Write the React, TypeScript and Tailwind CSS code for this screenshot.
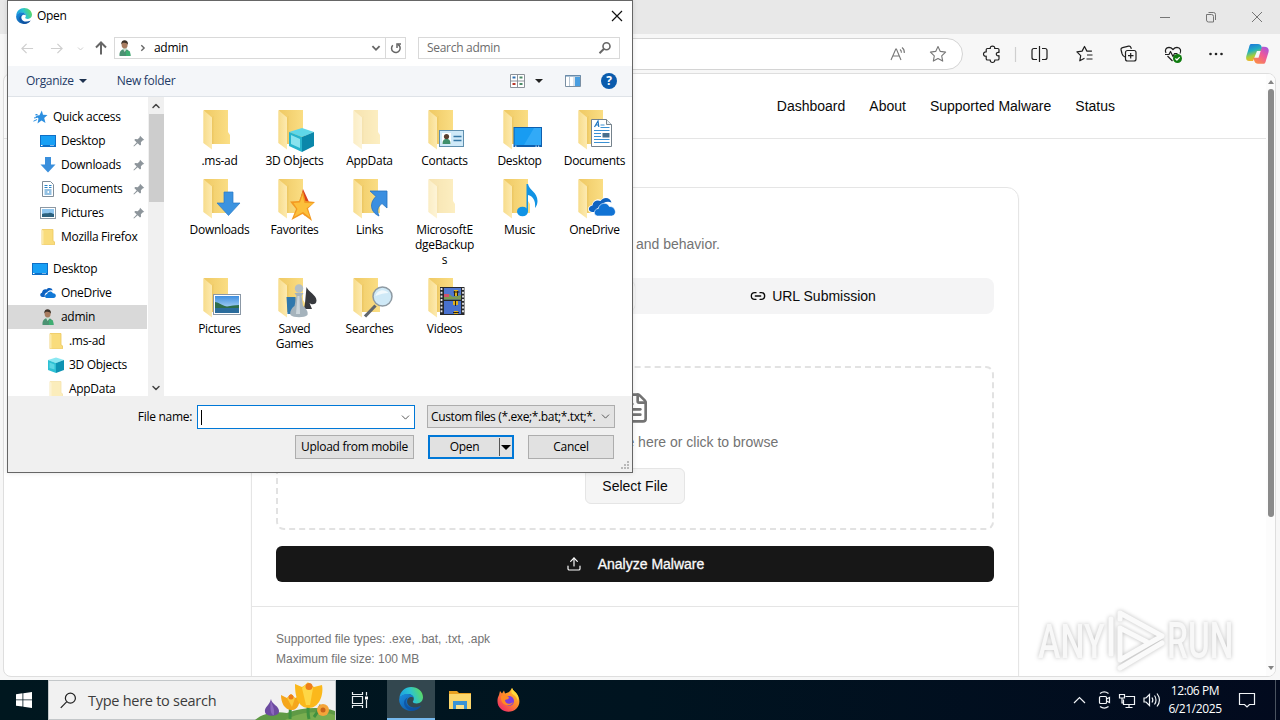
import type { ReactNode } from "react";
import { ChevronDown, ChevronUp, FileText, Link2, Upload } from "lucide-react";

const UI = "font-['Open_Sans','Noto_Sans',sans-serif]";
const WEB = "font-['Liberation_Sans',Arial,sans-serif]";

/* ---------- small icons ---------- */

function EdgeLogo({ className, id }: { className: string; id: string }) {
  return (
    <svg viewBox="0 0 24 24" className={className}>
      <defs>
        <linearGradient id={`${id}-top`} x1="0" y1="0.6" x2="1" y2="0.3">
          <stop offset="0" stopColor="#1b9de2" />
          <stop offset="0.5" stopColor="#2bc3d2" />
          <stop offset="1" stopColor="#5fdc5a" />
        </linearGradient>
        <linearGradient id={`${id}-low`} x1="0" y1="0" x2="1" y2="1">
          <stop offset="0" stopColor="#1b8fe0" />
          <stop offset="1" stopColor="#0c4a96" />
        </linearGradient>
      </defs>
      <path d="M0.4 11C1 4.500 6 0 12.200 0 19 0 24 4.800 24 10.200c0 3.800-2.900 6.200-6.200 6.200-2.700 0-4-.9-4-1.700 0-.7 1-1.100 1-3 0-2.400-2.400-4.400-5.400-4.400C5.500 7.300 1.800 8.800.4 11z" fill={`url(#${id}-top)`} />
      <path d="M0.200 12C.6 8.800 4.800 6.700 9.200 6.900c3.200.1 5.500 2.200 5.700 4.500-.8-1-2-1.500-3.300-1.300-2.300.4-3.700 2.400-3.500 4.800.3 3.400 3.800 5.600 7.900 5.500 2.500 0 4.600-.8 6-1.600-2 3.300-5.700 5.200-10 5.200C5.300 24-.3 18.500.2 12z" fill={`url(#${id}-low)`} />
      <path d="M9 10.500c-2 1.500-2.600 5-.6 7.700 2.600 3.600 9 3.600 13.400.7-2 3.200-5 4.800-8.600 5C7.500 22.500 4.800 19 5 15.500c.1-2.300 1.700-4.300 4-5z" fill="#0d4f9f" opacity="0.75" />
    </svg>
  );
}

function PersonIcon() {
  return (
    <svg viewBox="0 0 16 16" className="size-4 shrink-0">
      <path d="M2.500 16c-.3-4 1-6.500 5-7 4 .2 6 3 6 7z" fill="#4b9272" />
      <path d="M6 9l1.600 3L10 9l-.5-2H6.500z" fill="#c9dfd3" />
      <path d="M9 10.500l4 1 .5 4.500H9z" fill="#3fae72" />
      <ellipse cx="7.600" cy="4.800" rx="3" ry="3.800" fill="#a87c60" />
      <path d="M4.200 4.500C4 1.500 5.800 0 8 .2c2.300.2 3.300 2 2.900 4.600-.8-2-3.500-2-4.400-2-.8 0-1.500.6-2.300 1.700z" fill="#3c3128" />
    </svg>
  );
}

function DesktopIcon() {
  return (
    <svg viewBox="0 0 16 16" className="size-4 shrink-0">
      <rect x="0" y="2" width="16" height="12" fill="#0f6fc6" />
      <rect x="1" y="3" width="14" height="9" fill="#18a0f5" />
      <path d="M1 12.500h1.500M10.500 12.500h1M12.500 12.500h1" stroke="#fff" strokeWidth="1" />
    </svg>
  );
}

function CloudIcon() {
  return (
    <svg viewBox="0 0 16 16" className="size-4 shrink-0">
      <path d="M2.500 12C-.5 11.700-.4 8.200 2 7.700 2.300 5 4.600 3.800 6.500 4.600 8.300 2.200 12 2.800 12.700 5.500 9 4.300 7.500 6.600 7.300 7.400 5 7.500 4.200 10 5 12z" fill="#0f62c0" />
      <path d="M6.500 13c-2-.3-2-3.700.6-4 .4-3 4.700-3.600 5.800-.8 3.600-.1 4 4.500.6 4.800z" fill="#1178d6" />
    </svg>
  );
}

function CubeIcon() {
  return (
    <svg viewBox="0 0 16 16" className="size-4 shrink-0">
      <path d="M0 3l8-2.500L16 3 8 6z" fill="#8be8f2" />
      <path d="M0 3l8 3v10L0 13z" fill="#2dc0d4" />
      <path d="M16 3L8 6v10l8-3z" fill="#0e93b3" />
      <path d="M1.500 5.500l5 2v5l-5-1.500z" fill="#6fdfeb" opacity="0.7" />
    </svg>
  );
}

function SmallFolder({ pale }: { pale?: boolean }) {
  return (
    <svg viewBox="0 0 16 16" className={pale ? "size-4 shrink-0 opacity-50" : "size-4 shrink-0"}>
      <path d="M2 0.500h11V12l1.500.8v3H2z" fill="#f9dc7c" />
      <path d="M2 0.500h11V12l1.500.8v3H2z" fill="none" stroke="#ecc75a" strokeWidth="0.8" />
      <path d="M2 .5l1.500 1.500v13.500H2z" fill="#fbe9ab" />
    </svg>
  );
}

function DocIcon() {
  return (
    <svg viewBox="0 0 16 16" className="size-4 shrink-0">
      <path d="M2.500.5h8l3 3v12h-11z" fill="#fff" stroke="#7f8d99" />
      <path d="M4.500 4.500h3M9 4.500h2.500M4.500 6.500h3M9 6.500h2.500M4.500 9h7M4.500 11h3M4.500 13h7M9 11h2.500" stroke="#2b83c6" strokeWidth="1.100" />
    </svg>
  );
}

function PicIcon() {
  return (
    <svg viewBox="0 0 16 16" className="size-4 shrink-0">
      <rect x="0.500" y="2.500" width="15" height="11" fill="#fff" stroke="#8c98a3" />
      <rect x="2" y="4" width="12" height="8" fill="#8fc6ef" />
      <path d="M2 9c3-1.500 5 0 7-1s3 .5 5 1v3H2z" fill="#2c617e" />
    </svg>
  );
}

function DownIcon() {
  return (
    <svg viewBox="0 0 16 16" className="size-4 shrink-0">
      <path d="M5 0h6v7.500h4.500L8 15.500.5 7.500H5z" fill="#3a8fdc" />
    </svg>
  );
}

function QuickStar() {
  return (
    <svg viewBox="0 0 16 16" className="size-4 shrink-0">
      <path d="M9.800 1.500l1.200 4.300 4.500.3-3.300 3 1.300 4.900-4-2.400-4 2.900 1-5-3.500-2.700 4.500-.5z" fill="#2c8fe0" />
      <path d="M2 9l3-.6M1.500 12.200l3.600-1.700M3.500 5.500h2" stroke="#2c8fe0" />
    </svg>
  );
}

function PinIcon() {
  return (
    <svg viewBox="0 0 12 12" className="size-3 shrink-0">
      <path d="M7 .8L11.300 5l-1.400.3-2 2 .1 2.500-1 .8-2.300-2.400L1 11.600l-.6-.6L3.700 7.400 1.300 5l.9-1 2.500.2 2-2z" fill="#8d959b" />
    </svg>
  );
}

/* ---------- folder view ---------- */

function BigFolder({ pale, children }: { pale?: boolean; children?: ReactNode }) {
  return (
    <svg viewBox="1 0 48 48" className="size-12 shrink-0">
      <g opacity={pale ? 0.5 : 1}>
        <path d="M9 5h24v22l2 3v9H14z" fill="url(#folder-back)" />
        <path d="M8.300 5l8.700 7.500V44.500L8.300 38z" fill="url(#folder-front)" />
        <path d="M17 12.500v26.500h1.500V11z" fill="#e6bf57" opacity="0.45" />
      </g>
      {children}
    </svg>
  );
}

const OVERLAY: Record<string, ReactNode> = {
  cube: (
    <g transform="translate(-1 0)">
      <path d="M20 27l13-4 12 4-12 5z" fill="#5fd7e8" />
      <path d="M20 27l13 5v15l-13-6z" fill="#27b4cd" />
      <path d="M45 27l-12 5v15l12-6z" fill="#0b87aa" />
      <path d="M22 30l9 4v9l-9-4z" fill="#a4eff6" opacity="0.8" />
    </g>
  ),
  contact: (
    <g transform="translate(-1 0)">
      <rect x="20.500" y="25.500" width="24" height="16" fill="#cfe9f8" stroke="#5f8fae" />
      <rect x="23" y="28" width="9" height="11" fill="#fff" />
      <path d="M23.500 39c0-4 1.500-5 4-5s4 1 4 5z" fill="#3f8f6c" />
      <circle cx="27.500" cy="31.500" r="2.600" fill="#5a4030" />
      <path d="M34.500 31.500h8M34.500 35.500h8" stroke="#3679a6" strokeWidth="1.300" />
    </g>
  ),
  desktop: (
    <g transform="translate(-1 0)">
      <rect x="19.500" y="22" width="28.500" height="20" fill="#0f5fae" />
      <path d="M20.500 23h26.500v17H20.500z" fill="#189cf2" />
      <path d="M30 40L40 23h7v17z" fill="#3db0fa" opacity="0.7" />
      <path d="M21 41.200h1.500M41.500 41.200h1.200M44 41.200h1.200" stroke="#fff" />
    </g>
  ),
  document: (
    <>
      <path d="M21.500 14.500h15l5 5v22h-20z" fill="#fff" stroke="#75828c" />
      <path d="M36.500 14.500v5h5" fill="#e8eef2" stroke="#75828c" />
      <path d="M24.500 22l3.500-6 .8 6M26 20h2.500" stroke="#1d74c0" strokeWidth="1.200" fill="none" />
      <path d="M30.500 20h4M30.500 22.500h9M24 25.500h15.500M24 28.500h7M24 31.500h7M24 34.500h15.500M24 37.500h15.500" stroke="#3a91d4" />
      <rect x="32.500" y="28" width="7" height="4.500" fill="#4a6f8c" />
    </>
  ),
  download: <path d="M29 18h9v11h7L33.500 41.500 22 29h7z" fill="#3b93e0" stroke="#2a7ac6" strokeWidth="0.7" />,
  star: (
    <g transform="translate(1 2)">
      <path d="M32 13l6 13-4 14-6-12z" fill="#d9431e" />
      <path d="M32 15l2.500 10 9.500 1-7 6.500L41 45l-9.500-7-11 6L25 33l-6-7.500 9-.5z" fill="#f39a22" />
      <path d="M31.500 19l2 8 9 .3-7 5 3.500 9.200-7-5.500L23 41l3.500-8-4-6 6.500-.5z" fill="#fcc03c" />
    </g>
  ),
  link: <path d="M25 17h17v17l-5-4.500c-4 3-5.500 7-3 12.500-8-3.500-10.500-12.500-3-19.500z" fill="#3b8fe0" stroke="#2672bf" strokeWidth="0.8" />,
  music: (
    <>
      <ellipse cx="27.500" cy="37.500" rx="5.500" ry="4.800" fill="#1193e4" />
      <path d="M31.500 10H33c1 6 9.500 8 9.500 17 0 3-1 5-2.500 7 1-8-2.500-12-7-13v16.500h-1.500z" fill="#1193e4" />
    </>
  ),
  cloud: (
    <g transform="translate(0 1)">
      <path d="M22 38c-5.500-.5-5-7.500 0-8 1-5 5.500-7 9-5 4-5 11-4 12 2l1 4-16 8z" fill="#fff" />
      <path d="M22 37c-4.500-.5-4-6 .5-6.500.5-4.500 4.500-6 8-4.500 3.500-5 10-3.500 11 1.500-5-2-9 .5-10 4-4 .5-5.500 3-4.500 5.500z" fill="#0f62c0" />
      <path d="M27.500 41c-4.500-.5-4-7 .8-7.500 1-6 9-7 11-2 6.500-.5 8.500 8.500 2.500 9.500z" fill="#1173d4" stroke="#fff" strokeWidth="0.600" />
    </g>
  ),
  picture: (
    <g transform="translate(0 2)">
      <rect x="18.500" y="19.500" width="27" height="20" fill="#fff" stroke="#8b98a6" />
      <rect x="20" y="21" width="24" height="17" fill="url(#pic-sky)" />
      <path d="M20 27c3 0 6 3 12 4.500 4-.5 8-1.500 12-1.500v3.500H20z" fill="#2f6e4a" />
      <path d="M20 33h24v5H20z" fill="#2b6c9c" />
    </g>
  ),
  chess: (
    <g transform="translate(-.5 0)">
      <path d="M17 24h9l1 17h-9z" fill="#2f78ad" />
      <path d="M37 14c2 5 10 8 10 13.500 0 4-4.500 5-7 2.500l2.500 6h-8l1-6z" fill="#37393d" />
      <circle cx="29.500" cy="15.500" r="4.200" fill="#b3bfc6" />
      <path d="M25 20h9l-2 3 1.500 10c3 2 5.500 6 4.500 9-3 3-14 3-17 0-1-3 1-7 4-9l2-10z" fill="#a5b3bc" />
      <path d="M28 23h2l.5 18h-4z" fill="#dde6ea" opacity="0.7" />
    </g>
  ),
  search: (
    <g transform="translate(-1 -.5)">
      <path d="M21 44l10.500-11" stroke="#62676c" strokeWidth="3.200" />
      <circle cx="38.500" cy="24" r="9.500" fill="#cfe9f7" stroke="#8e9aa3" strokeWidth="1.500" />
      <path d="M31.500 23.500c1-6 9-8 13-3-4 0-8 1-13 3z" fill="#fff" opacity="0.7" />
    </g>
  ),
  video: (
    <g transform="translate(0 1)">
      <rect x="20" y="13" width="24.500" height="28" fill="#27292c" />
      <path d="M21.500 14v26M43 14v26" stroke="#e8e8e8" strokeWidth="1.800" strokeDasharray="2 1.700" />
      <rect x="24" y="14" width="17" height="11.500" fill="#5177d0" />
      <rect x="24" y="27" width="17" height="13" fill="#4871cf" />
      <path d="M24 22l5-2 4 3 8-2v4.500H24z" fill="#7b9a55" />
      <path d="M24 20h5v3h-5z" fill="#d0526d" />
      <path d="M34 16h4v6h-4zM33 27h5v4h-5zM34 37h4v3h-4z" fill="#e0b01e" />
      <path d="M33.500 18h6M34.500 17v5M37.500 17v5M35.500 26v6M33 38.500h6" stroke="#2c2417" />
    </g>
  ),
};

type Folder = { name: string; overlay?: string; pale?: boolean; lines?: string[] };

const ROWS: Folder[][] = [
  [
    { name: ".ms-ad" },
    { name: "3D Objects", overlay: "cube" },
    { name: "AppData", pale: true },
    { name: "Contacts", overlay: "contact" },
    { name: "Desktop", overlay: "desktop" },
    { name: "Documents", overlay: "document" },
  ],
  [
    { name: "Downloads", overlay: "download" },
    { name: "Favorites", overlay: "star" },
    { name: "Links", overlay: "link" },
    { name: "MicrosoftEdgeBackups", pale: true, lines: ["MicrosoftE", "dgeBackup", "s"] },
    { name: "Music", overlay: "music" },
    { name: "OneDrive", overlay: "cloud" },
  ],
  [
    { name: "Pictures", overlay: "picture" },
    { name: "Saved Games", overlay: "chess", lines: ["Saved", "Games"] },
    { name: "Searches", overlay: "search" },
    { name: "Videos", overlay: "video" },
  ],
];

function FolderGrid() {
  return (
    <div className="flex-1 overflow-hidden pt-2 pl-[18px]">
      {ROWS.map((row, i) => (
        <div key={i} className="flex w-[450px] pb-1.5">
          {row.map((f) => (
            <div key={f.name} className="flex w-[75px] shrink-0 flex-col items-center">
              <BigFolder pale={f.pale}>{f.overlay && OVERLAY[f.overlay]}</BigFolder>
              {(f.lines ?? [f.name]).map((l) => (
                <span key={l} className="h-[15px] leading-[15px] whitespace-nowrap">{l}</span>
              ))}
            </div>
          ))}
        </div>
      ))}
    </div>
  );
}

/* ---------- tree ---------- */

type Node = { label: string; icon: ReactNode; level: 0 | 1 | 2; pin?: boolean; selected?: boolean; gap?: boolean };

const TREE: Node[] = [
  { label: "Quick access", icon: <QuickStar />, level: 0 },
  { label: "Desktop", icon: <DesktopIcon />, level: 1, pin: true },
  { label: "Downloads", icon: <DownIcon />, level: 1, pin: true },
  { label: "Documents", icon: <DocIcon />, level: 1, pin: true },
  { label: "Pictures", icon: <PicIcon />, level: 1, pin: true },
  { label: "Mozilla Firefox", icon: <SmallFolder />, level: 1 },
  { label: "Desktop", icon: <DesktopIcon />, level: 0, gap: true },
  { label: "OneDrive", icon: <CloudIcon />, level: 1 },
  { label: "admin", icon: <PersonIcon />, level: 1, selected: true },
  { label: ".ms-ad", icon: <SmallFolder />, level: 2 },
  { label: "3D Objects", icon: <CubeIcon />, level: 2 },
  { label: "AppData", icon: <SmallFolder pale />, level: 2 },
];

const INDENT = ["pl-6", "pl-8", "pl-10"];

function Tree() {
  return (
    <div className="w-[139px] shrink-0 overflow-hidden pt-2">
      {TREE.map((n, i) => (
        <div key={i} className={`flex h-6 items-center gap-[5px] whitespace-nowrap ${INDENT[n.level]} ${n.gap ? "mt-2" : ""} ${n.selected ? "bg-[#d9d9d9]" : ""}`}>
          {n.icon}
          <span>{n.label}</span>
          {n.pin && <span className="mr-[2px] ml-auto"><PinIcon /></span>}
        </div>
      ))}
    </div>
  );
}

/* ---------- file dialog ---------- */

function NavArrow({ className, d }: { className: string; d: string }) {
  return (
    <svg viewBox="0 0 14 14" className={className} fill="none" stroke="currentColor">
      <path d={d} />
    </svg>
  );
}

function OpenDialog() {
  return (
    <div className={`absolute top-0 left-[7px] flex h-[473px] w-[626px] flex-col border border-[#666] bg-white text-[12px] tracking-[-0.3px] text-black shadow-[0_0_5px_rgba(0,0,0,0.12)] ${UI}`}>
      <div className="flex h-[29px] shrink-0 items-center pr-2 pl-2">
        <EdgeLogo className="size-4" id="edge-title" />
        <span className="ml-[5px]">Open</span>
        <svg viewBox="0 0 14 14" className="ml-auto size-[14px]" stroke="#111" strokeWidth="1.200">
          <path d="M2 2l10 10M12 2L2 12" />
        </svg>
      </div>

      <div className="flex h-9 shrink-0 items-center">
        <NavArrow className="ml-[13px] size-[13px] stroke-[1.3] text-[#cfcfcf]" d="M1 7h12M6 2L1 7l5 5" />
        <NavArrow className="ml-[16px] size-[13px] stroke-[1.3] text-[#cfcfcf]" d="M1 7h12M8 2l5 5-5 5" />
        <NavArrow className="ml-[14px] size-[7px] stroke-[2] text-[#cfcfcf]" d="M2 5l5 5 5-5" />
        <NavArrow className="ml-[10px] size-[14px] stroke-2 text-[#666]" d="M7 13.500V1.500M2 6.500l5-5 5 5" />
        <div className="ml-[6px] flex h-[22px] w-[292px] items-center border border-[#d9d9d9]">
          <span className="ml-[2px]"><PersonIcon /></span>
          <NavArrow className="ml-[6px] size-[8px] stroke-[2.4] text-[#666]" d="M4 2l5 5-5 5" />
          <span className="ml-[7px]">admin</span>
          <NavArrow className="ml-auto size-[10px] stroke-[2.6] text-[#666]" d="M2 4.500l5 5 5-5" />
          <span className="ml-1 flex h-full w-[20px] items-center justify-center border-l border-[#d9d9d9]">
            <svg viewBox="0 0 12 12" className="size-3" fill="none" stroke="#666" strokeWidth="1.500">
              <path d="M2.800 3.200A4.300 4.300 0 1 0 8 2.500" />
              <path d="M7 6V2h4" />
            </svg>
          </span>
        </div>
        <div className="ml-3 flex h-[22px] w-[202px] items-center border border-[#d9d9d9] pr-[7px] pl-2 text-[#6d6d6d]">
          <span>Search admin</span>
          <svg viewBox="0 0 14 14" className="ml-auto size-[14px]" fill="none" stroke="#666">
            <circle cx="8.500" cy="5.200" r="3.500" strokeWidth="1.600" />
            <path d="M6 7.800L1.500 12.200" strokeWidth="2" />
          </svg>
        </div>
      </div>

      <div className="flex h-[31px] shrink-0 items-center border-b border-[#dfe3e8] bg-[#f4f6f9] text-[#1e3a66]">
        <span className="ml-[18px]">Organize</span>
        <span className="ml-[5px] h-0 w-0 border-x-4 border-t-4 border-x-transparent border-t-[#1e3250]" />
        <span className="ml-[30px]">New folder</span>
        <svg viewBox="0 0 15 14" className="mr-[25px] ml-auto h-[14px] w-[15px]">
          <path d="M.5.500h14v13H.5zM7.500.5v13M.5 7h14" fill="#fff" stroke="#8b9199" />
          <path d="M2.500 3.500h3" stroke="#2f6fb0" strokeWidth="2" />
          <path d="M9.500 3.500h3M9.500 10h3" stroke="#4c8a68" strokeWidth="2" />
          <path d="M2.500 10h3" stroke="#b8392c" strokeWidth="2" />
        </svg>
        <span className="-ml-[15px] h-0 w-0 border-x-4 border-t-4 border-x-transparent border-t-[#222]" />
        <svg viewBox="0 0 16 12" className="ml-[22px] h-3 w-4">
          <path d="M.5.500h15v11H.5z" fill="#fff" stroke="#7a8fa3" />
          <path d="M0 1h16" stroke="#5b87b0" />
          <path d="M10 2h5v9h-5z" fill="#4a9ee0" />
          <path d="M4.500 2v9M9 2v9" stroke="#b7c6d4" />
        </svg>
        <span className="mr-[15px] ml-5 flex size-4 items-center justify-center rounded-full bg-[#0b5cad] text-[12px] font-bold text-white">?</span>
      </div>

      <div className="flex h-[299px] shrink-0">
        <Tree />
        <div className="ml-px flex w-4 shrink-0 flex-col items-center bg-[#f0f0f0]">
          <span className="flex h-[17px] items-center"><ChevronUp size={12} strokeWidth={3} color="#444" /></span>
          <span className="h-[88px] w-[15px] bg-[#cdcdcd]" />
          <span className="mt-auto flex h-[17px] items-center"><ChevronDown size={12} strokeWidth={3} color="#444" /></span>
        </div>
        <FolderGrid />
      </div>

      <div className="flex flex-1 flex-col bg-[#f0f0f0] pt-[9px] pr-[17px]">
        <div className="flex h-6 items-start">
          <span className="w-[184px] text-right leading-6">File name:</span>
          <div className="ml-[5px] flex h-6 w-[218px] items-center border border-[#0078d7] bg-white pr-[2px] pl-[3px]">
            <span className="h-[15px] w-px bg-black" />
            <ChevronDown size={13} strokeWidth={1.800} color="#555" className="ml-auto" />
          </div>
          <div className="ml-3 flex h-[23px] w-[188px] items-center justify-between border border-[#adadad] bg-[#e3e3e3] pr-[2px] pl-[3px]">
            <span className="tracking-[-0.37px] whitespace-nowrap">Custom files (*.exe;*.bat;*.txt;*.</span>
            <ChevronDown size={13} strokeWidth={1.800} color="#555" className="shrink-0" />
          </div>
        </div>
        <div className="mt-[6px] flex h-6 justify-end">
          <span className="flex w-[119px] items-center justify-center border border-[#adadad] bg-[#e1e1e1] whitespace-nowrap">Upload from mobile</span>
          <span className="ml-[14px] flex w-[86px] items-center border-2 border-[#0078d7] bg-[#e1e1e1]">
            <span className="flex-1 text-center">Open</span>
            <span className="flex h-[18px] w-[13px] items-center justify-center border-l border-[#555]">
              <span className="h-0 w-0 border-x-[5px] border-t-[5px] border-x-transparent border-t-black" />
            </span>
          </span>
          <span className="mr-px ml-[14px] flex w-[86px] items-center justify-center border border-[#adadad] bg-[#e1e1e1]">Cancel</span>
        </div>
        <svg viewBox="0 0 9 9" className="mt-[2px] -mr-[15px] size-[9px] self-end" fill="#b8b8b8">
          <path d="M6 0h2v2H6zM3 3h2v2H3zM6 3h2v2H6zM0 6h2v2H0zM3 6h2v2H3zM6 6h2v2H6z" />
        </svg>
      </div>
    </div>
  );
}

/* ---------- browser chrome ---------- */

function BrowserBars() {
  return (
    <>
      <div className="flex h-[34px] shrink-0 items-center justify-end bg-[#e8e8e8] pr-[18px]">
        <svg viewBox="0 0 102 12" className="h-3 w-[102px]" fill="none" stroke="#757575">
          <path d="M0 6.500h10" />
          <path d="M46.500 3.500h5a2 2 0 0 1 2 2V11h-5a2 2 0 0 1-2-2z" />
          <path d="M48.500 1.500h5a2 2 0 0 1 2 2V9" />
          <path d="M92 1l10 10M102 1L92 11" />
        </svg>
      </div>
      <div className="flex h-[39px] shrink-0 items-center justify-end pr-[11px]">
        <div className="flex h-[32px] w-[700px] items-center justify-end gap-[22px] rounded-full border border-[#d4d4d4] bg-white pr-[15px]">
          <svg viewBox="0 0 18 18" className="size-[18px]" fill="none" stroke="#777" strokeWidth="1.100">
            <path d="M2 15L6.800 4h.6L12 15M4 11h6.500" />
            <path d="M11 4.500c1 .7 1.500 2 1.400 3.300M13 2.500c2 1.500 2.500 3.500 2.300 5.500" />
          </svg>
          <svg viewBox="0 0 18 18" className="size-[18px]" fill="none" stroke="#777" strokeWidth="1.100" strokeLinejoin="round">
            <path d="M9 1.500l2.300 4.900 5.300.7-3.900 3.700 1 5.300L9 13.500l-4.700 2.600 1-5.300L1.400 7.100l5.300-.7z" />
          </svg>
        </div>
        <svg viewBox="0 0 306 24" className="h-6 w-[306px]" fill="none" stroke="#1f1f1f" strokeWidth="1.200" strokeLinejoin="round">
          {/* puzzle piece */}
          <path d="M24.500 6.500h2.800c-.6-3.300 5-3.300 4.400 0h3c.8 0 1.300.5 1.300 1.300v2.700c-3.600-.8-3.600 4 0 3.200v3c0 .8-.5 1.300-1.300 1.300h-3c.6 3.300-5 3.300-4.400 0h-2.800c-.8 0-1.300-.5-1.300-1.300v-2.500c-3.600.6-3.600-4.800 0-4.200V7.800c0-.8.5-1.300 1.300-1.300z" />
          <path d="M52.500 5v15" stroke="#cfcfcf" />
          <path d="M74 6.500h-3a2 2 0 0 0-2 2v7a2 2 0 0 0 2 2h3M79 6.500h3a2 2 0 0 1 2 2v7a2 2 0 0 1-2 2h-3M76.500 4v16" />
          {/* favorites */}
          <path d="M121.500 16.200l-4.700 2.600.9-5.200-3.800-3.700 5.200-.8 2.400-4.600 2.400 4.600h5M124 13h5.500M123.500 17h6" />
          {/* collections */}
          <path d="M162 15c-2.500-.5-2.500-2-3-3.500l-.9-3.500c-.3-1.300.4-2 1.500-2.300l6-1.600c1.200-.3 2 .3 2.400 1.600l.3 1.100" />
          <rect x="162.500" y="8.500" width="10.500" height="10.500" rx="2" />
          <path d="M167.700 11v5.500M165 13.700h5.500" />
          <path d="M203 11c-1.500-3 0-5.500 3-5.700 2 0 3 1 4 2.200 1-1.200 2-2.200 4-2.200 3.500.2 4.500 3.500 3 6.200M204.500 14l5 5M202 12.500h4l1.500-3 2.500 5 1.500-3h3" />
          <circle cx="214.500" cy="16.500" r="4.500" fill="#107c10" stroke="none" />
          <path d="M212.400 16.500l1.500 1.500 2.800-2.800" stroke="#fff" />
          <g fill="#222" stroke="none">
            <circle cx="247.500" cy="12" r="1.300" />
            <circle cx="253" cy="12" r="1.300" />
            <circle cx="258.500" cy="12" r="1.300" />
          </g>
          <g stroke="none">
            <path d="M288 2h7c2 0 3 1 3.500 2.500L300 9h-6l-4 10h-4c-3 0-3.300-3-2.500-5.500l2.500-8C286.500 3.500 287 2 288 2z" fill="url(#copilot-a)" />
            <path d="M302 22h-7c-2 0-3-1-3.500-2.500L290 16h5.500L299 5h2c4 0 5.300 2.500 4.500 5.500l-2.500 8c-.5 2-1 3.500-2 3.500z" fill="url(#copilot-b)" transform="translate(0 -.3)" />
          </g>
        </svg>
      </div>
    </>
  );
}

/* ---------- web page ---------- */

const NAV = ["Dashboard", "About", "Supported Malware", "Status"];

function WebPage() {
  return (
    <div className={`mr-1 ml-[3px] flex h-[604px] shrink-0 overflow-hidden rounded-lg border border-[#dedede] bg-white text-[14px] text-[#0a0a0a] ${WEB}`}>
      <div className="flex w-[1262px] flex-col overflow-hidden">
        <nav className="flex h-[65px] shrink-0 items-center justify-end gap-6 border-b border-[#e5e5e5] pr-[151px]">
          {NAV.map((n) => (
            <span key={n}>{n}</span>
          ))}
        </nav>
        <div className="mx-auto mt-12 h-[520px] w-3xl shrink-0 rounded-xl border border-[#e5e5e5] pt-[46px] shadow-[0_1px_2px_rgba(0,0,0,0.06)]">
          <div className="px-6">
            <p className="w-[444px] text-right leading-5 whitespace-nowrap text-[#737373]">Upload a file or submit a URL to analyze its structure and behavior.</p>
            <div className="mt-6 flex h-9 items-center rounded-lg bg-[#f4f4f5] p-[3px]">
              <span className="h-full flex-1 rounded-md bg-[#f6f6f6] shadow-[0_0_1px_rgba(0,0,0,0.2)]" />
              <span className="flex flex-1 items-center justify-center gap-1.5"><Link2 size={16} strokeWidth={2} />URL Submission</span>
            </div>
            <div className="mt-[52px] flex h-[164px] flex-col items-center rounded-lg border-2 border-dashed border-[#e2e2e2] pt-6">
              <FileText size={32} color="#737373" />
              <p className="mt-2 leading-5 text-[#737373]">Drag and drop your file here or click to browse</p>
              <span className="mt-4 flex h-9 w-[100px] items-center justify-center rounded-md border border-[#e5e5e5] bg-[#f5f5f5]">Select File</span>
            </div>
            <div className="mt-4 flex h-9 items-center justify-center gap-4 rounded-md bg-[#171717] text-[#fafafa] [-webkit-text-stroke:0.3px_#fafafa]">
              <Upload size={16} strokeWidth={1.800} />Analyze Malware
            </div>
          </div>
          <div className="mt-6 border-t border-[#e5e5e5] px-6 pt-[22px] text-[12px] leading-5 text-[#737373]">
            <p>Supported file types: .exe, .bat, .txt, .apk</p>
            <p>Maximum file size: 100 MB</p>
          </div>
        </div>
      </div>
      <div className="flex flex-1 flex-col items-center bg-[#fcfcfc] py-1.5 pl-px">
        <span className="h-0 w-0 border-x-[3px] border-b-4 border-x-transparent border-b-[#858585]" />
        <span className="mt-[5px] h-[428px] w-[6px] rounded-full bg-[#8a8a8a]" />
        <span className="mt-auto h-0 w-0 border-x-[3px] border-t-4 border-x-transparent border-t-[#858585]" />
      </div>
    </div>
  );
}

function Watermark() {
  return (
    <svg viewBox="0 0 210 66" className="absolute top-[607px] left-[1036px] h-[66px] w-[210px] drop-shadow-[0_0_2px_rgba(0,0,0,0.26)]">
      <g fill="#f8f8f8" fontFamily="Roboto, sans-serif" fontWeight="500" fontSize="49">
        <text transform="translate(2 51) scale(.69 1)">ANY</text>
        <text transform="translate(131 51) scale(.68 1)">RUN</text>
      </g>
      <g fill="none" stroke="#fafafa" strokeWidth="5" strokeLinejoin="round" strokeLinecap="round">
        <path d="M84 12v-6l42 23-42 24V21l27 14" />
        <path d="M75 12v35M84 61l42-25" />
      </g>
    </svg>
  );
}

/* ---------- taskbar ---------- */

function Flowers() {
  return (
    <svg viewBox="0 0 80 39" className="h-[39px] w-20">
      <path d="M0 39c8-7 20-9 32-7 14-5 32-7 48-2v9z" fill="#5f9a45" />
      <path d="M30 39c14-8 34-10 50-5v5z" fill="#79ad4f" />
      <path d="M35 38c0-6 0-10 1-14M54 38c-2-8-1-12 0-20M59 36c4-5 5-8 7-12" stroke="#3f9140" strokeWidth="3" fill="none" />
      <path d="M16 18c0 5 9 7 8 13-1 5-13 5-14 0-1-5 5-7 6-13z" fill="#6c4ba0" />
      <path d="M16 18c0 5 4 8 3 16-4 0-4-8-3-16z" fill="#8b68bd" />
      <path d="M26 14l6 3 4-4 4 4 5-2c0 7-2 14-8 14-8 0-11-8-11-15z" fill="#f5a61c" />
      <path d="M32 17l4-4 4 4-3 9z" fill="#fcc83a" />
      <g transform="translate(-2 0)">
        <path d="M42 3l7 3 6-4 6 4 8-2c2 10-3 23-13 23-11 0-14-11-14-24z" fill="#fbb81b" />
        <path d="M49 7l6-6 5 6-3 17h-4z" fill="#fed746" />
        <circle cx="56" cy="5.500" r="3.500" fill="#ee7e1b" />
      </g>
      <circle cx="36" cy="16" r="2.500" fill="#ee7e1b" />
      <circle cx="68" cy="29" r="6" fill="#f4a43a" />
      <circle cx="68" cy="29" r="2.500" fill="#c8641a" />
    </svg>
  );
}

function Taskbar() {
  return (
    <div className={`flex h-10 shrink-0 items-center bg-linear-to-r from-[#00171f] via-[#001420] to-[#020a1e] text-white ${UI}`}>
      <span className="flex w-12 justify-center">
        <svg viewBox="0 0 16 16" className="size-4" fill="#fff">
          <path d="M0 2.200l6.500-.9v6.200H0zM7.300 1.200L16 0v7.500H7.300zM0 8.300h6.500v6.300L0 13.700zM7.300 8.300H16V16l-8.700-1.200z" />
        </svg>
      </span>
      <div className="flex h-10 w-72 items-center border border-[#c3c7c9] bg-[#f1f1f1] pl-[11px] text-[#3c3c3c]">
        <svg viewBox="0 0 18 18" className="size-[17px]" fill="none" stroke="#222" strokeWidth="1.300">
          <circle cx="11" cy="6.500" r="5.300" />
          <path d="M7 10.500L.8 16.800" />
        </svg>
        <span className="ml-[11px] pt-px text-[14.500px] tracking-[-0.27px] whitespace-nowrap">Type here to search</span>
        <span className="ml-auto"><Flowers /></span>
      </div>
      <span className="flex w-[51px] justify-center pr-[3px]">
        <svg viewBox="0 0 18 16" className="h-4 w-[18px]" fill="none" stroke="#e8eef0" strokeWidth="1.200">
          <path d="M1.500 0v2.500h10V0M1.500 16v-2.500h10V16M1.500 4.500h10v7h-10zM15.500 0v3.500M15.500 8v8" />
          <path d="M14 4.500h3v3h-3z" fill="#fff" stroke="none" />
        </svg>
      </span>
      <span className="flex h-10 w-12 items-center justify-center border-b-2 border-[#76b9ed] bg-[#33474f]">
        <EdgeLogo className="size-6" id="edge-task" />
      </span>
      <span className="flex w-[49px] justify-center">
        <svg viewBox="0 0 22 20" className="h-5 w-[22px]">
          <path d="M0 1h8l2 2h12v3H0z" fill="#e8a020" />
          <path d="M0 4h22v15H0z" fill="#fbd66c" />
          <path d="M4 11h14v8h-3v-4H7v4H4z" fill="#3a93d6" />
          <path d="M7 15h8v4H7z" fill="#fbe08a" />
        </svg>
      </span>
      <span className="flex w-[49px] justify-center">
        <svg viewBox="0 0 24 24" className="size-6">
          <path d="M15 0c1 3 4 4 5.500 7 3 5 2.300 10-1 13.500-4 4-11 4.500-15.500.5-4-3.600-4.500-9.500-2-14L3 3l2 2.500L7 2.500l1 3C10 4.500 12 4.500 13 3z" fill="url(#fox)" />
          <circle cx="12" cy="13" r="5" fill="#7a3de0" />
          <path d="M4 8c3-2 6-1 8 1.500 0 1.500-2 2-4 2.500 0 4 5 5 8 2-1 4-8 5-11 0-1-2-1.500-4-1-6z" fill="#ff8a24" />
          <path d="M15 0c1 3 4 4 5.500 7 1 2 1.200 4 .5 6-1-3-2-5-5-6.500-2-1-2-4-1-6.500z" fill="#ffd83a" />
        </svg>
      </span>
      <svg viewBox="0 0 96 20" className="mr-[2px] ml-auto h-5 w-24" fill="none" stroke="#f0f3f6" strokeWidth="1.200">
        <path d="M4 13l5.500-5.500L15 13" />
        <rect x="29.500" y="6.500" width="7" height="7" rx="1" />
        <path d="M36.500 9l3-1.500v5l-3-1.500M30 3.500c2.500-1.800 6-1.800 8.500 0M30 16.500c2.500 1.800 6 1.800 8.500 0" />
        <path d="M55.500 6.500h9v8h-11v-5M59 14.500v3M55.500 17.500h7M49.500 4.500h5v3.500h-5zM52 8v5h1.500" />
        <path d="M74 8h2l3.500-3.500v11L76 12h-2zM82 7.500c1 1.500 1 3.500 0 5M84.500 5.500c2 2.500 2 6.500 0 9M87 3.500c3 4 3 9 0 13" />
      </svg>
      <div className="flex w-[54px] flex-col items-center text-[12px] leading-[18px] tracking-[-0.4px] whitespace-nowrap">
        <span>12:06 PM</span>
        <span>6/21/2025</span>
      </div>
      <svg viewBox="0 0 18 18" className="mr-[19px] ml-4 size-[18px]" fill="none" stroke="#f0f3f6" strokeWidth="1.200">
        <path d="M1.500 2.500h15v11h-5L9 16l-2.500-2.500h-5z" />
      </svg>
      <span className="mr-1 h-10 w-px bg-[#4a5360]" />
    </div>
  );
}

function Gradients() {
  return (
    <svg className="absolute size-0">
      <defs>
        <linearGradient id="folder-back"><stop offset="0" stopColor="#efc964" /><stop offset="1" stopColor="#fbdf86" /></linearGradient>
        <linearGradient id="folder-front"><stop offset="0" stopColor="#f7dc8b" /><stop offset="1" stopColor="#fdeab0" /></linearGradient>
        <linearGradient id="pic-sky" x2="0" y2="1"><stop offset="0" stopColor="#3f8fe0" /><stop offset="1" stopColor="#d4ecfa" /></linearGradient>
        <linearGradient id="copilot-a" x2="0.300" y2="1"><stop offset="0" stopColor="#1a6fe0" /><stop offset="0.450" stopColor="#23b0c0" /><stop offset="0.750" stopColor="#a8cf3a" /><stop offset="1" stopColor="#f5b22c" /></linearGradient>
        <linearGradient id="copilot-b" x1="1" x2="0.300" y2="1"><stop offset="0" stopColor="#9a55e8" /><stop offset="0.500" stopColor="#ee5a9a" /><stop offset="1" stopColor="#fb8a4a" /></linearGradient>
        <linearGradient id="fox" x1="1" x2="0.200" y2="1"><stop offset="0" stopColor="#ffd335" /><stop offset="0.500" stopColor="#ff8a2a" /><stop offset="1" stopColor="#f0286a" /></linearGradient>
      </defs>
    </svg>
  );
}

export default function App() {
  return (
    <div className="relative flex h-[720px] w-[1280px] flex-col overflow-hidden bg-[#f7f7f7]">
      <Gradients />
      <BrowserBars />
      <WebPage />
      <div className="h-[3px] shrink-0" />
      <Taskbar />
      <Watermark />
      <OpenDialog />
    </div>
  );
}
